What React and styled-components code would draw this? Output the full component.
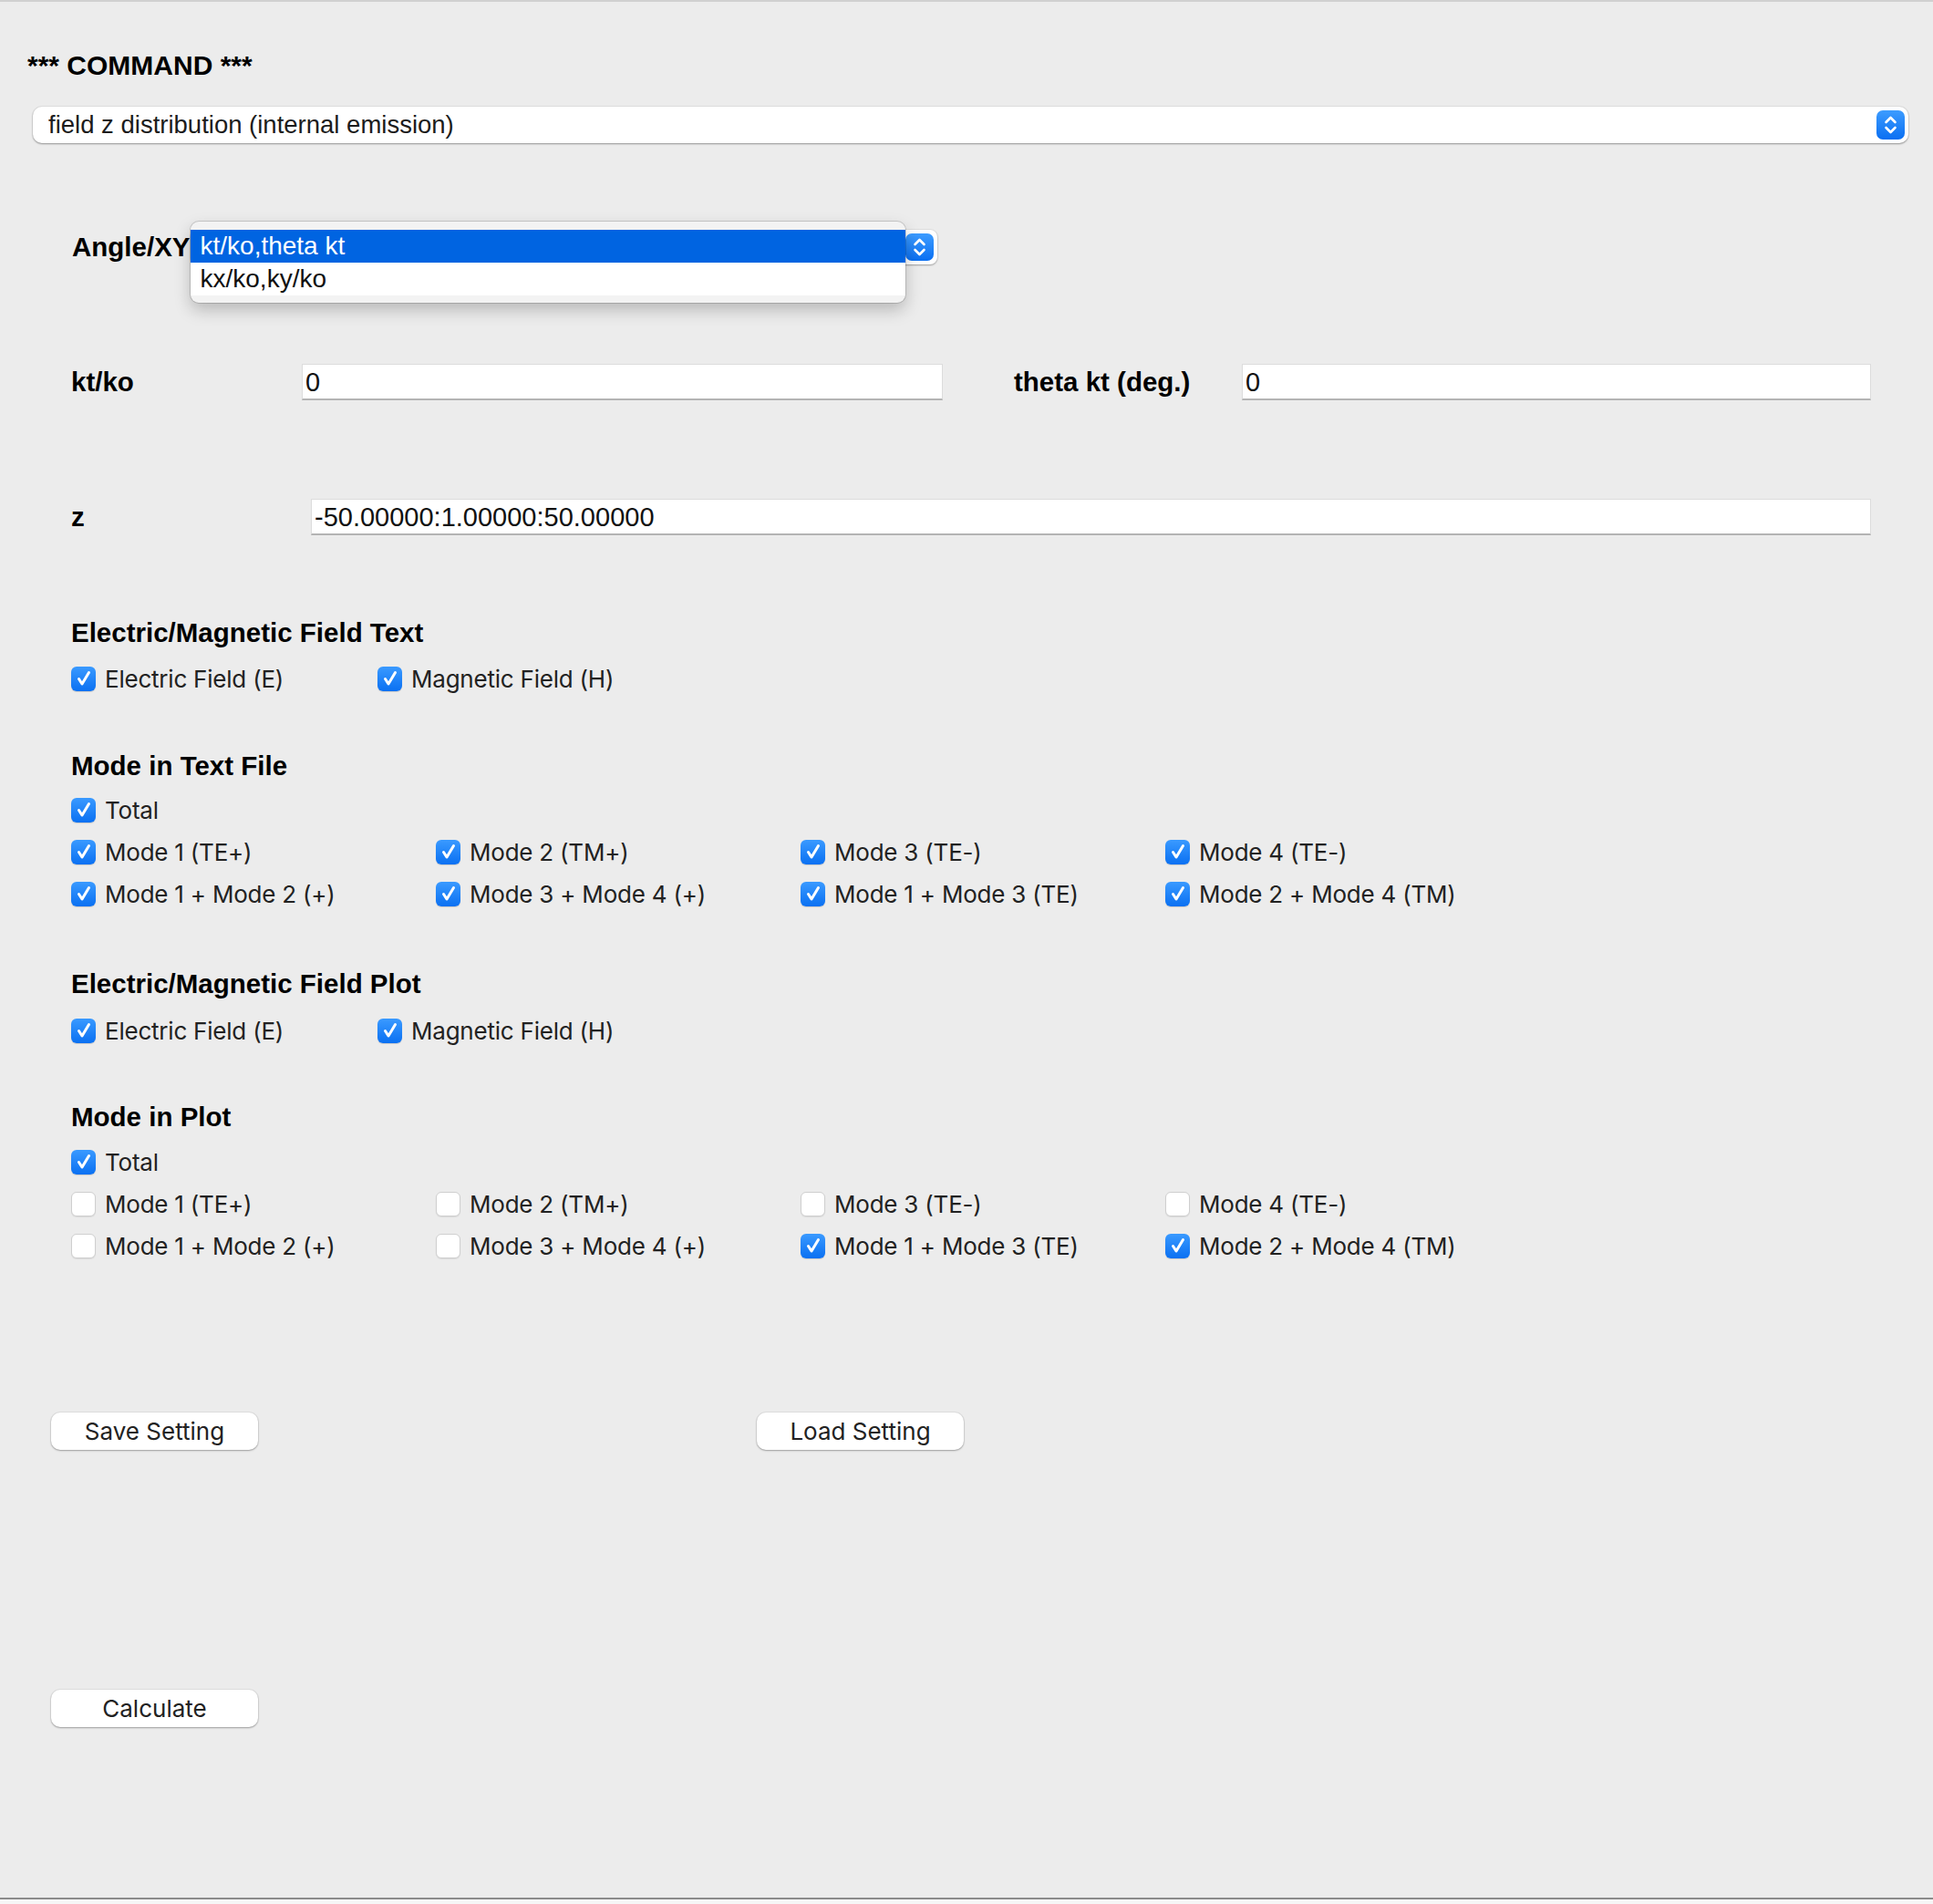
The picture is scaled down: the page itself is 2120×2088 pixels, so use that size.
import React from "react";
import styled, { createGlobalStyle } from "styled-components";

const GlobalStyle = createGlobalStyle`
    body {
        margin: 0;
        background: #ececec;
    }
`;

const textModes = [
    ["Mode 1 (TE+)", true], ["Mode 2 (TM+)", true], ["Mode 3 (TE-)", true], ["Mode 4 (TE-)", true],
    ["Mode 1 + Mode 2 (+)", true], ["Mode 3 + Mode 4 (+)", true], ["Mode 1 + Mode 3 (TE)", true], ["Mode 2 + Mode 4 (TM)", true],
];

const plotModes = [
    ["Mode 1 (TE+)", false], ["Mode 2 (TM+)", false], ["Mode 3 (TE-)", false], ["Mode 4 (TE-)", false],
    ["Mode 1 + Mode 2 (+)", false], ["Mode 3 + Mode 4 (+)", false], ["Mode 1 + Mode 3 (TE)", true], ["Mode 2 + Mode 4 (TM)", true],
];

const Stepper = ({ size }) => (
    <StepperBox $size={size}>
        <svg width="31" height="32" viewBox="0 0 31 32" fill="none" stroke="#fff" strokeWidth="2.6" strokeLinecap="round" strokeLinejoin="round">
            <path d="M10.5 13 L15.5 8 L20.5 13" />
            <path d="M10.5 19 L15.5 24 L20.5 19" />
        </svg>
    </StepperBox>
);

const Check = ({ label, checked, full }) => (
    <CheckItem $full={full}>
        <Box $checked={checked}>
            {checked && (
                <svg width="26" height="26" viewBox="0 0 26 26" fill="none" stroke="#fff" strokeWidth="3" strokeLinecap="round" strokeLinejoin="round">
                    <path d="M7.5 13.5 L11 19 L18.5 6.5" />
                </svg>
            )}
        </Box>
        {label}
    </CheckItem>
);

const App = () => {
    return (
        <Page>
            <GlobalStyle />
            <Title>*** COMMAND ***</Title>
            <CommandSelect>
                <span>field z distribution (internal emission)</span>
                <Stepper size={32} />
            </CommandSelect>

            <AngleRow>
                <Label>Angle/XY</Label>
                <Combo>
                    <Stepper size={30} />
                    <Popup>
                        <Option $active>kt/ko,theta kt</Option>
                        <Option>kx/ko,ky/ko</Option>
                    </Popup>
                </Combo>
            </AngleRow>

            <FieldRow $top={109}>
                <Label $w={253}>kt/ko</Label>
                <TextField $w={703}>0</TextField>
                <Label $w={250} $ml={78}>theta kt (deg.)</Label>
                <TextField $w={690}>0</TextField>
            </FieldRow>

            <FieldRow $top={108}>
                <Label $w={263}>z</Label>
                <TextField $w={1711}>-50.00000:1.00000:50.00000</TextField>
            </FieldRow>

            <Section $top={89}>
                <Heading>Electric/Magnetic Field Text</Heading>
                <CheckGrid $cols={2} $colW={336} $mt={14}>
                    <Check label="Electric Field (E)" checked />
                    <Check label="Magnetic Field (H)" checked />
                </CheckGrid>
            </Section>

            <Section $top={60}>
                <Heading>Mode in Text File</Heading>
                <CheckGrid $cols={4} $colW={400} $mt={12}>
                    <Check label="Total" checked full />
                    {textModes.map(([label, checked]) => <Check key={label} label={label} checked={checked} />)}
                </CheckGrid>
            </Section>

            <Section $top={63}>
                <Heading>Electric/Magnetic Field Plot</Heading>
                <CheckGrid $cols={2} $colW={336} $mt={15}>
                    <Check label="Electric Field (E)" checked />
                    <Check label="Magnetic Field (H)" checked />
                </CheckGrid>
            </Section>

            <Section $top={59}>
                <Heading>Mode in Plot</Heading>
                <CheckGrid $cols={4} $colW={400} $mt={13}>
                    <Check label="Total" checked full />
                    {plotModes.map(([label, checked]) => <Check key={label} label={label} checked={checked} />)}
                </CheckGrid>
            </Section>

            <ButtonRow $top={165}>
                <Button>Save Setting</Button>
                <Button>Load Setting</Button>
            </ButtonRow>

            <ButtonRow $top={263}>
                <Button>Calculate</Button>
            </ButtonRow>

            <Footer />
        </Page>
    );
};

export default App;

const Page = styled.div`
    width: 2120px;
    min-height: 2088px;
    box-sizing: border-box;
    background: #ececec;
    border-top: 2px solid #d0d0d0;
    display: flex;
    flex-direction: column;
    font-family: "Liberation Sans", Arial, sans-serif;
    color: #000;
`;

const Title = styled.h1`
    margin: 52px 0 0 30px;
    height: 36px;
    line-height: 36px;
    font-size: 30px;
    font-weight: 700;
`;

const StepperBox = styled.span`
    width: 31px;
    height: ${p => p.$size}px;
    border-radius: 7px;
    background: linear-gradient(#3d9cff, #0a6ff2);
    display: flex;
    align-items: center;
    justify-content: center;
    flex-shrink: 0;
`;

const CommandSelect = styled.div`
    margin: 27px 0 0 36px;
    width: 2057px;
    height: 40px;
    box-sizing: border-box;
    padding: 0 4px 0 17px;
    display: flex;
    align-items: center;
    justify-content: space-between;
    background: #fff;
    border-radius: 10px;
    box-shadow: 0 1px 2px rgba(0, 0, 0, 0.35), 0 0 0 1px rgba(0, 0, 0, 0.05);
    font-size: 27.5px;
    color: #1c1c1c;
`;

const AngleRow = styled.div`
    margin-top: 95px;
    padding-left: 79px;
    height: 38px;
    display: flex;
    align-items: center;
`;

const Label = styled.div`
    width: ${p => (p.$w ? `${p.$w}px` : "auto")};
    margin-left: ${p => p.$ml || 0}px;
    flex-shrink: 0;
    font-size: 29.5px;
    font-weight: 700;
    line-height: 36px;
`;

const Combo = styled.div`
    position: relative;
    width: 819px;
    height: 38px;
    box-sizing: border-box;
    padding-right: 4px;
    display: flex;
    align-items: center;
    justify-content: flex-end;
    background: #fff;
    border-radius: 8px;
    box-shadow: 0 1px 2px rgba(0, 0, 0, 0.3), 0 0 0 1px rgba(0, 0, 0, 0.05);
`;

const Popup = styled.div`
    position: absolute;
    top: -9px;
    left: 0;
    width: 784px;
    box-sizing: border-box;
    padding: 9px 0 8px;
    background: #f3f3f3;
    border-radius: 9px;
    box-shadow: 0 8px 18px rgba(0, 0, 0, 0.22), 0 0 0 1px rgba(0, 0, 0, 0.14);
    overflow: hidden;
`;

const Option = styled.div`
    height: 36px;
    line-height: 36px;
    padding-left: 11px;
    font-size: 28px;
    background: ${p => (p.$active ? "#0064e1" : "#fff")};
    color: ${p => (p.$active ? "#fff" : "#111")};
`;

const FieldRow = styled.div`
    margin-top: ${p => p.$top}px;
    padding-left: 78px;
    height: 40px;
    display: flex;
    align-items: center;
`;

const TextField = styled.div`
    width: ${p => p.$w}px;
    height: 40px;
    box-sizing: border-box;
    padding-left: 3px;
    background: #fff;
    border: 1px solid #dcdcdc;
    border-bottom: 2px solid #b4b4b4;
    font-size: 29px;
    line-height: 38px;
    color: #111;
`;

const Section = styled.div`
    margin-top: ${p => p.$top}px;
    padding-left: 78px;
`;

const Heading = styled.div`
    height: 36px;
    line-height: 36px;
    font-size: 29.5px;
    font-weight: 700;
`;

const CheckGrid = styled.div`
    margin-top: ${p => p.$mt}px;
    display: grid;
    grid-template-columns: repeat(${p => p.$cols}, ${p => p.$colW}px);
    grid-auto-rows: 36px;
    row-gap: 10px;
`;

const CheckItem = styled.div`
    grid-column: ${p => (p.$full ? "1 / -1" : "auto")};
    display: flex;
    align-items: center;
    gap: 10px;
    font-family: Inter, "Liberation Sans", sans-serif;
    font-size: 26px;
    letter-spacing: -0.22px;
    color: #222;
    white-space: nowrap;
`;

const Box = styled.span`
    width: 27px;
    height: 27px;
    box-sizing: border-box;
    border-radius: 6px;
    display: flex;
    align-items: center;
    justify-content: center;
    flex-shrink: 0;
    background: ${p => (p.$checked ? "linear-gradient(#3a9aff, #0a70f2)" : "#fff")};
    border: ${p => (p.$checked ? "none" : "1px solid #cfcfcf")};
    box-shadow: ${p => (p.$checked ? "0 1px 1px rgba(0,0,0,0.15)" : "0 1px 1px rgba(0,0,0,0.08)")};
`;

const ButtonRow = styled.div`
    margin-top: ${p => p.$top}px;
    padding-left: 56px;
    display: flex;
    gap: 547px;
`;

const Button = styled.button`
    width: 227px;
    height: 41px;
    padding: 0;
    border: none;
    border-radius: 10px;
    background: #fff;
    box-shadow: 0 1px 2px rgba(0, 0, 0, 0.3), 0 0 0 1px rgba(0, 0, 0, 0.05);
    font-family: Inter, "Liberation Sans", sans-serif;
    font-size: 26px;
    color: #222;
`;

const Footer = styled.div`
    margin-top: auto;
    height: 5px;
    border-top: 2px solid #8b8b8b;
    background: #f6f6f6;
`;
